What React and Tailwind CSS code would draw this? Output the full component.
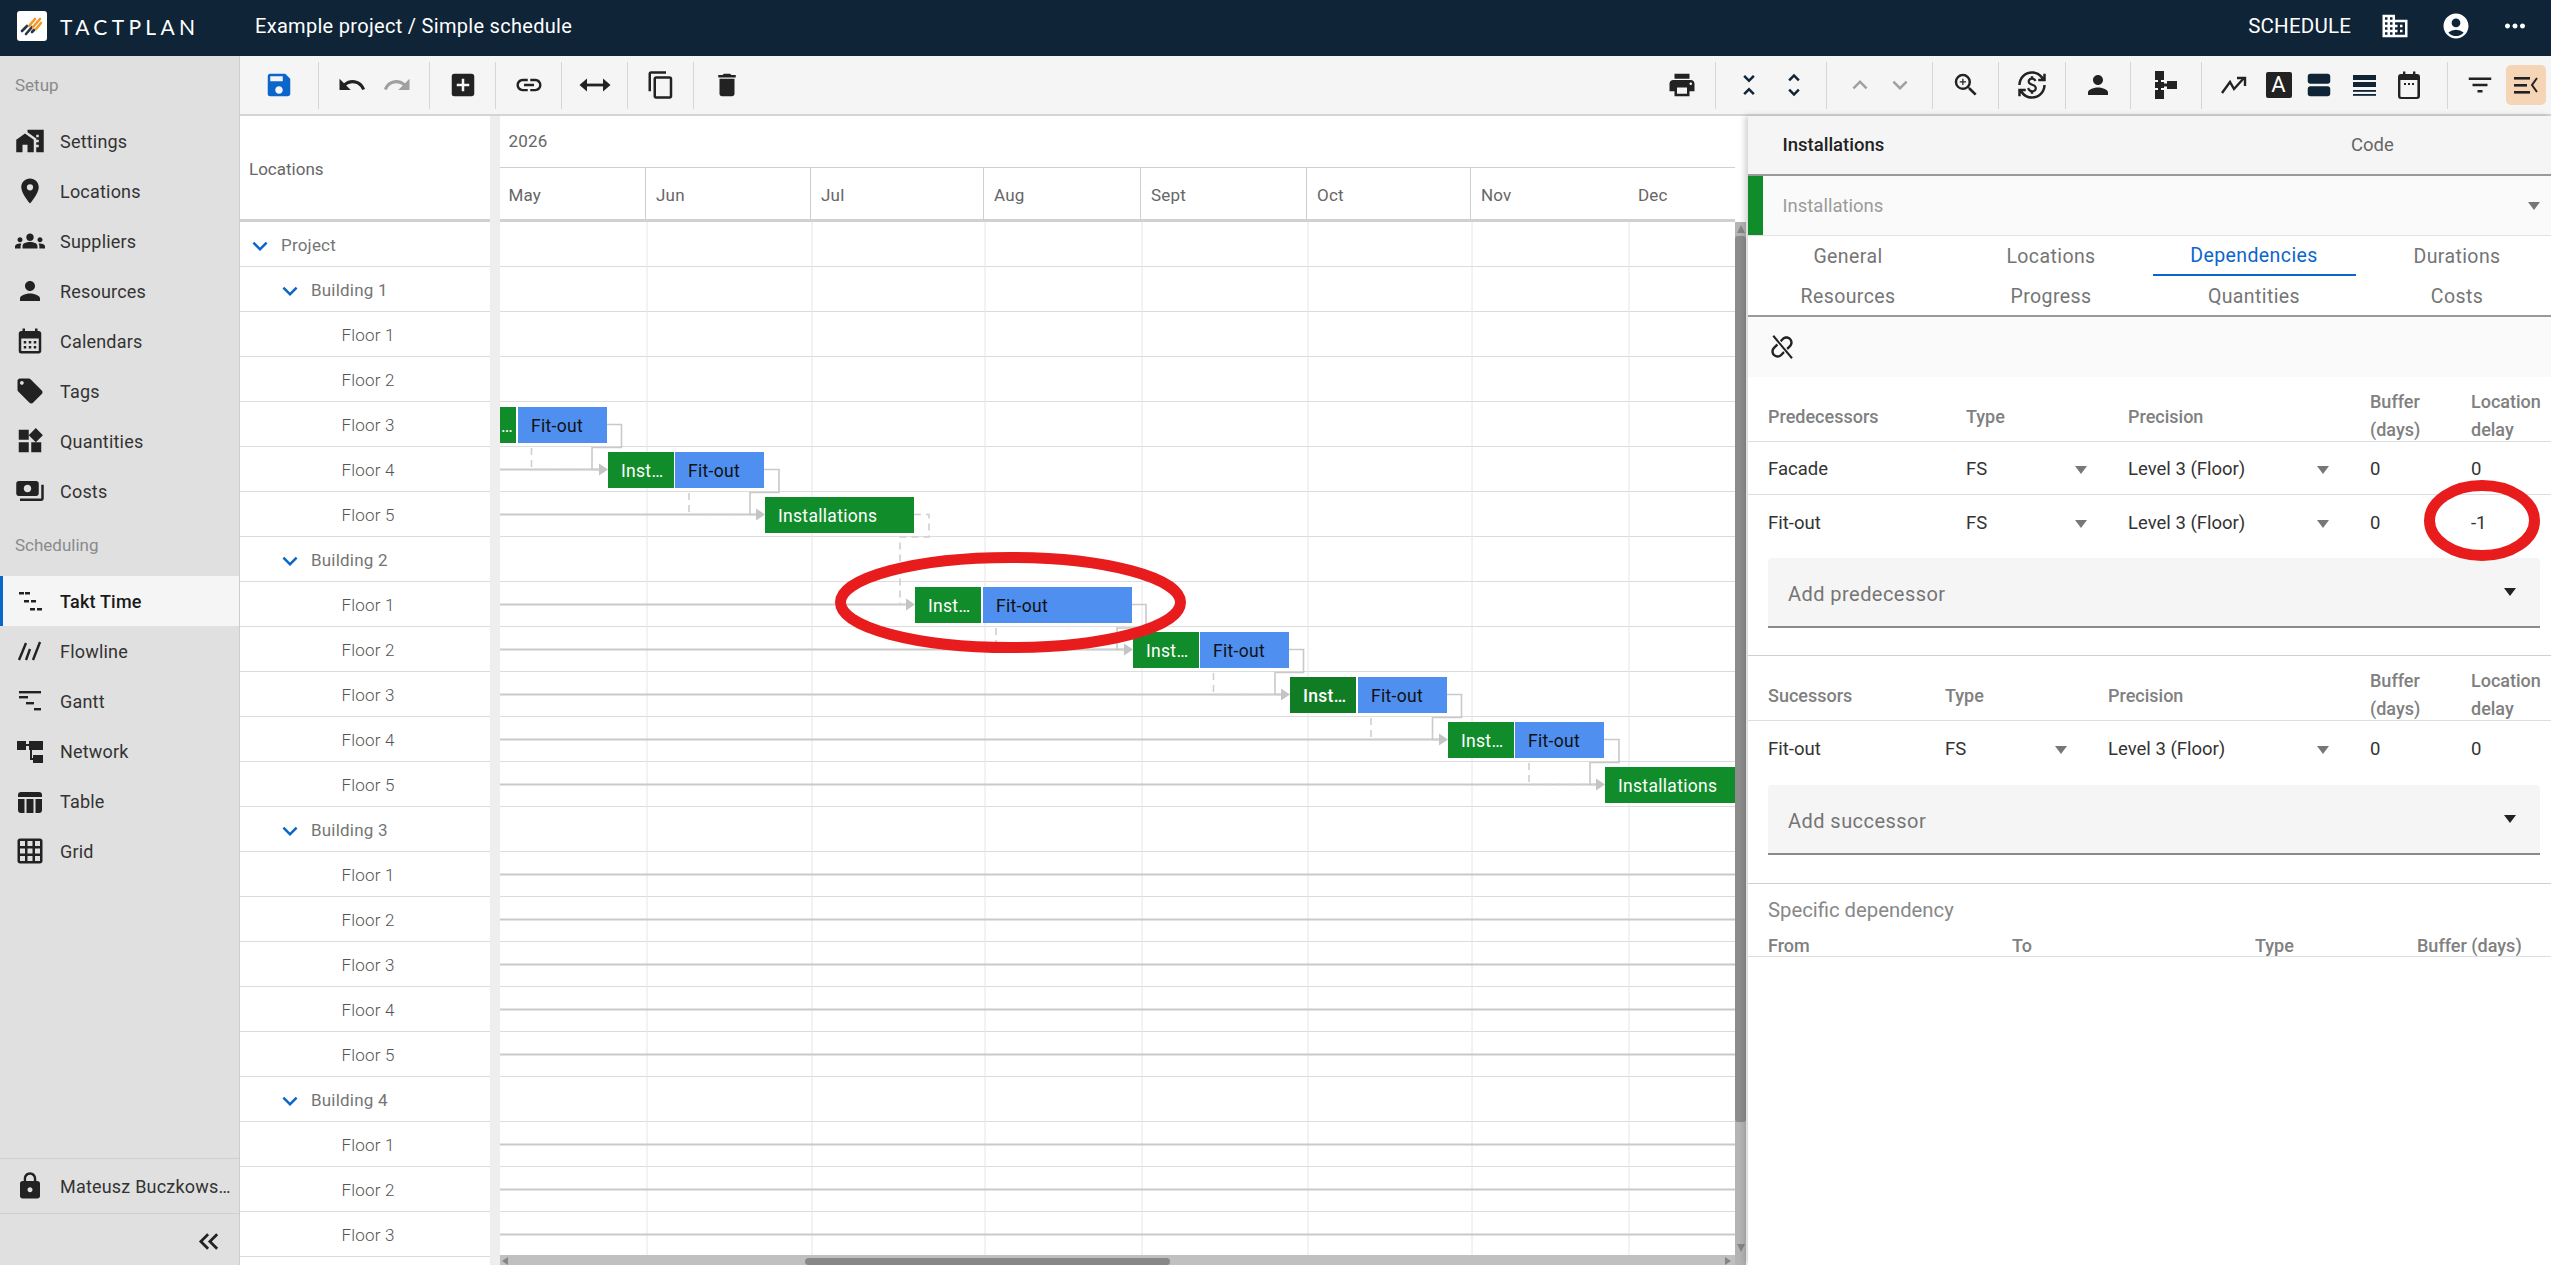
import React from "react";
import {
  MdHomeWork, MdLocationOn, MdGroups, MdPerson, MdCalendarMonth, MdLocalOffer, MdWidgets, MdPayments,
  MdGridOn, MdLock, MdKeyboardDoubleArrowLeft, MdDomain, MdAccountCircle, MdMoreHoriz, MdSave, MdUndo, MdRedo,
  MdAddBox, MdLink, MdOutlineContentCopy, MdDelete, MdPrint, MdUnfoldLess, MdUnfoldMore, MdExpandLess, MdExpandMore,
  MdZoomIn, MdCurrencyExchange, MdViewAgenda, MdFilterList, MdKeyboardArrowDown,
} from "react-icons/md";

const Takt = () => (
  <svg width="30" height="30" viewBox="0 0 30 30" fill="#222">
    <rect x="4" y="6" width="5" height="2.5" /><rect x="10" y="6" width="5" height="2.5" />
    <rect x="9" y="14" width="5" height="2.5" /><rect x="16" y="14" width="5" height="2.5" />
    <rect x="15" y="22" width="5" height="2.5" /><rect x="22" y="22" width="5" height="2.5" />
  </svg>
);
const Flowline = () => (
  <svg width="30" height="30" viewBox="0 0 30 30" stroke="#222" strokeWidth="2.4" fill="none">
    <path d="M4 24 L11 7" /><path d="M11 24 L15 13" /><path d="M18 24 L25 6" />
  </svg>
);
const GanttIcon = () => (
  <svg width="30" height="30" viewBox="0 0 30 30" fill="#222">
    <rect x="4" y="5" width="22" height="2.4" /><rect x="4" y="10" width="9" height="2.4" />
    <rect x="11" y="16" width="8" height="2.4" /><rect x="19" y="22" width="7" height="2.4" />
  </svg>
);
const NetworkIcon = () => (
  <svg width="30" height="30" viewBox="0 0 30 30" fill="#222">
    <rect x="2" y="5" width="9" height="9" /><rect x="14" y="5" width="14" height="9" />
    <rect x="18" y="19" width="10" height="8" /><rect x="10" y="8" width="5" height="2" />
    <rect x="15" y="13" width="2" height="11" /><rect x="15" y="22" width="4" height="2" />
  </svg>
);
const TableIcon = () => (
  <svg width="30" height="30" viewBox="0 0 30 30" fill="#222">
    <path d="M3 9 a3 3 0 0 1 3-3 h18 a3 3 0 0 1 3 3 v2 H3z" />
    <path d="M3 13 h6.5 v14 H6 a3 3 0 0 1-3-3z" /><rect x="11.5" y="13" width="7" height="14" />
    <path d="M20.5 13 H27 v11 a3 3 0 0 1-3 3 h-3.5z" />
  </svg>
);
const ArrowsIcon = () => (
  <svg width="34" height="30" viewBox="0 0 34 30" fill="#222">
    <rect x="6" y="13.6" width="22" height="2.8" /><path d="M1.5 15 L9 8.5 V21.5z" /><path d="M32.5 15 L25 8.5 V21.5z" />
  </svg>
);
const HierIcon = () => (
  <svg width="22" height="28" viewBox="0 0 22 28" fill="#222">
    <rect x="0" y="0" width="9" height="9" /><rect x="0" y="19" width="9" height="9" />
    <rect x="3" y="8" width="3" height="12" /><rect x="0" y="11" width="9" height="6" />
    <rect x="9" y="12.5" width="3" height="3" /><rect x="12" y="10" width="10" height="8" />
  </svg>
);
const TrendIcon = () => (
  <svg width="30" height="30" viewBox="0 0 30 30" fill="none" stroke="#222" strokeWidth="2.4">
    <path d="M3 23 L11 12 L15 19 L25 8" /><path d="M18 8 H26 V16" />
  </svg>
);
const LinesIcon = () => (
  <svg width="30" height="30" viewBox="0 0 30 30" fill="#0f2437">
    <rect x="4" y="5" width="23" height="5" /><rect x="4" y="12" width="23" height="5" />
    <rect x="4" y="20" width="23" height="1.8" /><rect x="4" y="24" width="23" height="1.8" />
  </svg>
);
const CalIcon = () => (
  <svg width="30" height="30" viewBox="0 0 30 30" fill="#222">
    <rect x="9" y="1.5" width="2.4" height="4" /><rect x="19" y="1.5" width="2.4" height="4" />
    <path fillRule="evenodd" d="M7 4 h16 a3 3 0 0 1 3 3 v19 a3 3 0 0 1-3 3 H7 a3 3 0 0 1-3-3 V7 a3 3 0 0 1 3-3z M6.4 10 v16 a1 1 0 0 0 1 1 h15 a1 1 0 0 0 1-1 V10z" />
    <rect x="10" y="13" width="2" height="2" /><rect x="14" y="13" width="2" height="2" /><rect x="18" y="13" width="2" height="2" />
  </svg>
);
const PanelIcon = () => (
  <svg width="30" height="30" viewBox="0 0 30 30" fill="none">
    <rect x="3" y="7" width="16" height="2.6" fill="#222" /><rect x="3" y="14" width="13" height="2.6" fill="#222" />
    <rect x="3" y="21" width="16" height="2.6" fill="#222" /><path d="M26 8 L21 15 L26 22" stroke="#222" strokeWidth="2" />
  </svg>
);
const UnlinkIcon = () => (
  <svg width="30" height="30" viewBox="0 0 24 24" fill="#222">
    <g transform="rotate(-45 12 12)">
      <path d="M3.9 12c0-1.71 1.39-3.1 3.1-3.1h4V7H7c-2.76 0-5 2.24-5 5s2.24 5 5 5h4v-1.9H7c-1.71 0-3.1-1.39-3.1-3.1zM17 7h-4v1.9h4c1.71 0 3.1 1.39 3.1 3.1s-1.39 3.1-3.1 3.1h-4V17h4c2.76 0 5-2.24 5-5s-2.24-5-5-5z" />
    </g>
    <path d="M5 3 L20 21" stroke="#fafafa" strokeWidth="3.5" />
    <path d="M5 3 L20 21" stroke="#222" strokeWidth="1.6" />
  </svg>
);
const Logo = () => (
  <div className="w-[30px] h-[30px] rounded-[3px] bg-white flex items-center justify-center shrink-0">
    <svg width="26" height="26" viewBox="0 0 26 26" fill="none" strokeWidth="2.6" strokeLinecap="round">
      <path d="M3 18 L8 13" stroke="#2a3642" /><path d="M7 21 L13 14" stroke="#2a3642" /><path d="M13 19 L15 17" stroke="#2a3642" />
      <path d="M10 13 L16 6" stroke="#f19a2a" /><path d="M14 14 L21 6" stroke="#f19a2a" /><path d="M17 16 L22 10" stroke="#f19a2a" />
    </svg>
  </div>
);
const Caret = ({ dark }) => (
  <svg width="12" height="8" viewBox="0 0 12 8" className="shrink-0">
    <path d="M0 0 H12 L6 8z" fill={dark ? "#222" : "#777"} />
  </svg>
);
const Tri = ({ dir }) => {
  const d = { up: "M4 0 L8 8 H0z", down: "M0 0 H8 L4 8z", left: "M0 4 L6 0 V8z", right: "M6 4 L0 0 V8z" }[dir];
  return (
    <svg width="8" height="8" viewBox="0 0 8 8" className="shrink-0"><path d={d} fill="#858585" /></svg>
  );
};

const Sep = () => <div className="w-px h-[47px] bg-[#d6d6d6] shrink-0" />;

function NavItem({ icon, label, active }) {
  return (
    <div className={`h-[50px] flex items-center ${active ? "bg-[#f5f5f5] border-l-[3px] border-[#0b66cc] pl-[12px]" : "pl-[15px]"}`}>
      <div className="w-[30px] flex justify-center text-[#222] text-[30px]">{icon}</div>
      <span className={`ml-[15px] text-[18px] tracking-[0.2px] ${active ? "font-medium text-[#1a1a1a]" : "text-[#333]"}`}>{label}</span>
    </div>
  );
}

const setupNav = [
  [<MdHomeWork />, "Settings"], [<MdLocationOn />, "Locations"], [<MdGroups />, "Suppliers"], [<MdPerson />, "Resources"],
  [<MdCalendarMonth />, "Calendars"], [<MdLocalOffer />, "Tags"], [<MdWidgets />, "Quantities"], [<MdPayments />, "Costs"],
];
const schedNav = [
  [<Takt />, "Takt Time", true], [<Flowline />, "Flowline"], [<GanttIcon />, "Gantt"], [<NetworkIcon />, "Network"],
  [<TableIcon />, "Table"], [<MdGridOn />, "Grid"],
];

function buildRows() {
  const rows = [{ label: "Project", level: 0 }];
  for (let b = 1; b <= 4; b++) {
    rows.push({ label: `Building ${b}`, level: 1 });
    const n = b === 4 ? 3 : 5;
    for (let f = 1; f <= n; f++) rows.push({ label: `Floor ${f}`, level: 2 });
  }
  return rows;
}
const rows = buildRows();

const months = [["May", 146], ["Jun", 165], ["Jul", 173], ["Aug", 157], ["Sept", 166], ["Oct", 164], ["Nov", 157], ["Dec", 107]];
const vlines = [647, 812, 985, 1142, 1308, 1472, 1629];

// page coordinates of the chart; canvas origin is (500, 222)
const O = { x: 500, y: 222 };
const bars = [
  ["g", 500, 516, 407, "…"],
  ["b", 518, 607, 407, "Fit-out"],
  ["g", 608, 674, 452, "Inst…"],
  ["b", 675, 764, 452, "Fit-out"],
  ["g", 765, 914, 497, "Installations"],
  ["g", 915, 981, 587, "Inst…"],
  ["b", 983, 1132, 587, "Fit-out"],
  ["g", 1133, 1199, 632, "Inst…"],
  ["b", 1200, 1289, 632, "Fit-out"],
  ["d", 1290, 1356, 677, "Inst…"],
  ["b", 1358, 1447, 677, "Fit-out"],
  ["g", 1448, 1514, 722, "Inst…"],
  ["b", 1515, 1604, 722, "Fit-out"],
  ["g", 1605, 1735, 767, "Installations"],
];
const longLines = [
  [469.5, 600], [514.5, 757], [604.5, 907], [649.5, 1125], [694.5, 1282], [739.5, 1440], [784.5, 1597],
  ...[874.5, 919.5, 964.5, 1009.5, 1054.5, 1144.5, 1189.5, 1234.5].map((y) => [y, 1735]),
];
const solid = [
  "M607 424.5 H621.5 V447.5 H592 V469.5 H600",
  "M764 469.5 H779 V492.5 H750 V514.5 H757",
  "M1132 604.5 H1146 V628 H1117 V649.5 H1125",
  "M1289 649.5 H1303.5 V672.5 H1275 V694.5 H1282",
  "M1447 694.5 H1461.5 V717.5 H1432.5 V739.5 H1440",
  "M1604 739.5 H1619 V762.5 H1590 V784.5 H1597",
];
const dashed = [
  "M531.5 448 V469.5 H600",
  "M689 493 V514.5 H757",
  "M914 514.5 H929 V537 H900 V604.5 H907",
  "M996 628 V649.5 H1125",
  "M1213.5 673 V694.5 H1282",
  "M1371 718 V739.5 H1440",
  "M1529 763 V784.5 H1597",
];
const arrows = [[608, 469.5], [765, 514.5], [915, 604.5], [1133, 649.5], [1290, 694.5], [1448, 739.5], [1605, 784.5]];

function Bar({ kind, x0, x1, y, label }) {
  const cls = kind === "b" ? "bg-[#4f8fef] text-[#111]" : kind === "d" ? "bg-[#107c24] text-white font-medium" : "bg-[#118c2a] text-white";
  const pad = label === "…" ? "pl-[1px]" : "pl-[13px]";
  return (
    <div
      className={`absolute h-[36px] flex items-center pt-[2px] text-[17.5px] tracking-[0.3px] whitespace-nowrap overflow-hidden ${pad} ${cls}`}
      style={{ left: x0 - O.x, width: x1 - x0, top: y - O.y }}
    >
      {label}
    </div>
  );
}

function GanttCanvas() {
  return (
    <div className="relative flex-1 min-h-0 overflow-hidden bg-white">
      {rows.map((r, i) => (
        <div key={i} className="h-[45px] border-b-[1.5px] border-[#dcdcdc]" />
      ))}
      <svg className="absolute left-0 top-0" width="1235" height="1040" viewBox={`${O.x} ${O.y} 1235 1040`} fill="none">
        {vlines.map((x) => <line key={x} x1={x} x2={x} y1={O.y} y2={O.y + 1040} stroke="#e6e6e6" strokeWidth="1" />)}
        {longLines.map(([y, x2]) => <line key={y} x1={O.x} x2={x2} y1={y} y2={y} stroke="#c9c9c9" strokeWidth="2" />)}
        {solid.map((d) => <path key={d} d={d} stroke="#c9c9c9" strokeWidth="1.6" />)}
        {dashed.map((d) => <path key={d} d={d} stroke="#cfcfcf" strokeWidth="1.6" strokeDasharray="7 5" />)}
        {arrows.map(([x, y]) => <path key={x} d={`M${x} ${y} L${x - 9} ${y - 6} V${y + 6}z`} fill="#c4c4c4" />)}
      </svg>
      {bars.map(([kind, x0, x1, y, label]) => (
        <Bar key={x0} kind={kind} x0={x0} x1={x1} y={y} label={label} />
      ))}
    </div>
  );
}

const th = "text-[18px] font-medium text-[#808080]";
const td = "text-[18.5px] text-[#333]";

function DepHeader({ first, cols }) {
  return (
    <div className={`grid ${cols} pl-5 h-[65px] shrink-0 items-center pt-[11px] border-b border-[#dedede] ${th}`}>
      <div>{first}</div>
      <div>Type</div>
      <div>Precision</div>
      <div className="leading-[28px]">Buffer<br />(days)</div>
      <div className="leading-[28px] whitespace-nowrap">Location<br />delay</div>
    </div>
  );
}
function DepRow({ name, cols, border, delay, h }) {
  return (
    <div className={`grid ${cols} pl-5 ${h} shrink-0 items-center pt-[4px] ${border ? "border-b border-[#dedede]" : ""} ${td}`}>
      <div>{name}</div>
      <div className="flex items-center justify-between pr-[41px]"><span>FS</span><Caret /></div>
      <div className="flex items-center justify-between pr-[41px]"><span>Level 3 (Floor)</span><Caret /></div>
      <div>0</div>
      <div>{delay}</div>
    </div>
  );
}
function AddField({ label }) {
  return (
    <div className="ml-5 w-[772px] h-[70px] shrink-0 bg-[#f5f5f5] rounded-t-[4px] border-b-2 border-[#8a8a8a] flex items-center justify-between pl-5 pr-[24px] text-[20px] tracking-[0.45px] text-[#757575]">
      <span className="pt-[3px]">{label}</span><Caret dark />
    </div>
  );
}

const tabs = ["General", "Locations", "Dependencies", "Durations", "Resources", "Progress", "Quantities", "Costs"];

export default function App() {
  const predCols = "grid-cols-[198px_162px_242px_101px_1fr]";
  const sucCols = "grid-cols-[177px_163px_262px_101px_1fr]";
  return (
    <div className="relative w-[2551px] h-[1265px] overflow-hidden flex flex-col bg-white [font-family:Roboto,sans-serif]">
      {/* top bar */}
      <header className="h-14 shrink-0 bg-[#0f2437] text-white flex items-center pl-[17px] pb-[4px]">
        <Logo />
        <span className="ml-[13px] w-[135px] font-['Lato',sans-serif] font-normal text-[21px] tracking-[4.3px] leading-none whitespace-nowrap">TACTPLAN</span>
        <span className="ml-[60px] text-[20px] tracking-[0.3px]">Example project / Simple schedule</span>
        <div className="ml-auto flex items-center pr-[21px]">
          <span className="text-[20.5px] tracking-[0.2px]">SCHEDULE</span>
          <MdDomain className="ml-[29px] text-[30px]" />
          <MdAccountCircle className="ml-[31px] text-[30px]" />
          <MdMoreHoriz className="ml-[29px] text-[30px]" />
        </div>
      </header>

      <div className="flex flex-1 min-h-0">
        {/* sidebar */}
        <aside className="w-60 shrink-0 bg-[#e0e0e0] border-r border-[#cdcdcd] flex flex-col">
          <div className="h-[60px] flex items-center pl-[15px] text-[17px] text-[#8a8a8a]">Setup</div>
          <div>
            {setupNav.map(([icon, label]) => <NavItem key={label} icon={icon} label={label} />)}
          </div>
          <div className="h-[60px] flex items-center pl-[15px] text-[17px] text-[#8a8a8a]">Scheduling</div>
          <div>
            {schedNav.map(([icon, label, active]) => <NavItem key={label} icon={icon} label={label} active={active} />)}
          </div>
          <div className="mt-auto border-t border-[#cfcfcf] h-[55px] flex items-center pl-[15px]">
            <div className="w-[30px] flex justify-center text-[30px] text-[#222]"><MdLock /></div>
            <span className="ml-[15px] w-[172px] truncate text-[18px] tracking-[0.2px] text-[#333]">Mateusz Buczkowski</span>
          </div>
          <div className="border-t border-[#cfcfcf] h-[52px] flex items-center justify-end pr-[14px] pt-[3px] text-[33px] text-[#222]">
            <MdKeyboardDoubleArrowLeft />
          </div>
        </aside>

        <main className="flex-1 min-w-0 flex flex-col">
          {/* toolbar */}
          <div className="h-[60px] shrink-0 bg-[#f5f5f5] border-b-2 border-[#d4d4d4] flex items-center text-[30px] text-[#222]">
            <div className="w-[78px] flex justify-center text-[#0b66cc]"><MdSave /></div><Sep />
            <div className="w-[110px] flex justify-center gap-[15px]"><MdUndo /><MdRedo className="text-[#a0a0a0]" /></div><Sep />
            <div className="w-[65px] flex justify-center"><MdAddBox /></div><Sep />
            <div className="w-[65px] flex justify-center"><MdLink /></div><Sep />
            <div className="w-[65px] flex justify-center"><ArrowsIcon /></div><Sep />
            <div className="w-[65px] flex justify-center"><MdOutlineContentCopy /></div><Sep />
            <div className="w-[65px] flex justify-center"><MdDelete /></div>

            <div className="ml-auto w-[66px] flex justify-center"><MdPrint /></div><Sep />
            <div className="w-[110px] flex justify-center gap-[15px] text-[#0f2437]"><MdUnfoldLess /><MdUnfoldMore /></div><Sep />
            <div className="w-[105px] flex justify-center gap-[10px] text-[#a0a0a0]"><MdExpandLess /><MdExpandMore /></div><Sep />
            <div className="w-[65px] flex justify-center"><MdZoomIn /></div><Sep />
            <div className="w-[66px] flex justify-center"><MdCurrencyExchange /></div><Sep />
            <div className="w-[64px] flex justify-center"><MdPerson /></div><Sep />
            <div className="w-[70px] flex justify-center pr-[1px]"><HierIcon /></div><Sep />
            <div className="w-[245px] flex items-center pl-[17px]">
              <TrendIcon />
              <div className="ml-[16.5px] w-[26px] h-[26px] rounded-[2px] bg-[#222] text-white text-[22px] leading-[26px] text-center">A</div>
              <MdViewAgenda className="ml-[12.5px] text-[#0f2437]" />
              <div className="ml-[15px]"><LinesIcon /></div>
              <div className="ml-[15px]"><CalIcon /></div>
            </div><Sep />
            <div className="w-[103px] shrink-0 flex items-center pl-[17px] gap-[11px]">
              <MdFilterList />
              <div className="w-[40px] h-[40px] rounded-[5px] bg-[#f5d5b5] flex items-center justify-center"><PanelIcon /></div>
            </div>
          </div>

          <div className="flex flex-1 min-h-0">
            {/* locations tree */}
            <div className="w-[250px] shrink-0 flex flex-col overflow-hidden">
              <div className="h-[106px] shrink-0 border-b-[3px] border-[#d0d0d0] flex items-center pl-[9px] pt-[4px] text-[17px] text-[#666]">Locations</div>
              {rows.map((r, i) => (
                <div key={i} className="h-[45px] shrink-0 border-b-[1.5px] border-[#dcdcdc] flex items-center pt-[3px]">
                  {r.level === 2 ? (
                    <span className="ml-[101.5px] text-[17px] font-light tracking-[0.2px] text-[#555]">{r.label}</span>
                  ) : (
                    <div className={`flex items-center text-[#757575] text-[17px] tracking-[0.2px] ${r.level === 0 ? "ml-[5px]" : "ml-[35px]"}`}>
                      <MdKeyboardArrowDown className="text-[30px] text-[#0b66cc] mr-[6px]" />
                      <span>{r.label}</span>
                    </div>
                  )}
                </div>
              ))}
            </div>
            <div className="w-[10px] shrink-0 bg-[#eeeeee]" />

            {/* chart */}
            <div className="w-[1248px] shrink-0 flex flex-col">
              <div className="h-[52px] shrink-0 w-[1235px] border-b-[1.5px] border-[#d0d0d0] flex items-center pl-[8.5px] pt-[1px] text-[17px] tracking-[0.2px] text-[#666]">2026</div>
              <div className="h-[54px] shrink-0 w-[1235px] border-b-[3px] border-[#d0d0d0] flex">
                {months.map(([m, w], i) => (
                  <div key={m} className={`flex items-center pt-[5px] text-[17px] tracking-[0.2px] text-[#666] ${i === 0 ? "pl-[8.5px]" : "pl-[10px]"} ${i < 6 ? "border-r border-[#cfcfcf]" : ""}`} style={{ width: w }}>{m}</div>
                ))}
              </div>
              <div className="flex-1 min-h-0 flex">
                <div className="w-[1235px] flex flex-col">
                  <GanttCanvas />
                  <div className="h-[10px] shrink-0 bg-[#c0c0c0] relative flex items-end justify-between px-[2px]">
                    <Tri dir="left" />
                    <div className="absolute left-[305px] bottom-0 w-[365px] h-[7px] rounded-[4px] bg-[#888888]" />
                    <Tri dir="right" />
                  </div>
                </div>
                <div className="w-[11px] bg-[#b4b4b4] flex flex-col items-center">
                  <div className="h-[14px] flex items-center"><Tri dir="up" /></div>
                  <div className="w-full h-[886px] rounded-[3px] bg-[#8c8c8c]" />
                  <div className="mt-auto mb-[13px]"><Tri dir="down" /></div>
                </div>
              </div>
            </div>

            {/* right panel */}
            <section className="flex-1 min-w-0 overflow-hidden bg-white shadow-[-3px_0_6px_rgba(0,0,0,0.18)] z-10 flex flex-col">
              <div className="h-[60px] shrink-0 bg-[#f5f5f5] border-b-2 border-[#9a9a9a] flex items-center pt-[2px]">
                <span className="w-[603px] pl-[34.5px] text-[18.5px] font-medium text-[#222]">Installations</span>
                <span className="text-[18.5px] text-[#666]">Code</span>
              </div>
              <div className="h-[60px] shrink-0 bg-[#fafafa] border-b border-[#e2e2e2] flex items-center">
                <div className="w-[15px] h-full bg-[#118c2a]" />
                <span className="ml-[19.5px] mt-[3px] text-[18.5px] text-[#9a9a9a]">Installations</span>
                <div className="ml-auto mr-[11px]"><Caret /></div>
              </div>
              <div className="h-[81px] shrink-0 border-b-2 border-[#9a9a9a] overflow-hidden">
                <div className="-ml-[1.5px] w-[812px] h-full grid grid-cols-[repeat(4,203px)] grid-rows-2 text-[19.5px] tracking-[0.4px] text-[#757575]">
                  {tabs.map((t) => (
                    <div key={t} className={`flex items-center justify-center pt-[2px] ${t === "Dependencies" ? "text-[#0b66cc] border-b-2 border-[#0b66cc]" : ""}`}>{t}</div>
                  ))}
                </div>
              </div>
              <div className="h-[60px] shrink-0 bg-[#fafafa] flex items-center pl-[19px]"><UnlinkIcon /></div>

              <DepHeader first="Predecessors" cols={predCols} />
              <DepRow name="Facade" cols={predCols} border delay="0" h="h-[53px]" />
              <DepRow name="Fit-out" cols={predCols} delay="-1" h="h-[53px]" />
              <div className="h-[10px] shrink-0" />
              <AddField label="Add predecessor" />
              <div className="h-[28px] shrink-0 border-b border-[#d0d0d0]" />

              <DepHeader first="Sucessors" cols={sucCols} />
              <DepRow name="Fit-out" cols={sucCols} delay="0" h="h-[54px]" />
              <div className="h-[10px] shrink-0" />
              <AddField label="Add successor" />
              <div className="h-[29px] shrink-0 border-b border-[#d0d0d0]" />

              <div className="h-[48px] shrink-0 flex items-center pl-5 pt-[5px] text-[20.3px] text-[#888888]">Specific dependency</div>
              <div className="h-[18px] shrink-0 grid grid-cols-[244px_243px_162px_1fr] pl-5 items-center text-[18px] font-medium text-[#808080]">
                <div>From</div><div>To</div><div>Type</div><div>Buffer (days)</div>
              </div>
              <div className="mt-[6px] border-b border-[#dedede]" />
            </section>
          </div>
        </main>
      </div>

      {/* annotation ellipses drawn over the page */}
      <svg className="absolute left-[829px] top-[546px] pointer-events-none z-20" width="364" height="114" viewBox="0 0 364 114" fill="none">
        <ellipse cx="181.5" cy="56.5" rx="170" ry="45" stroke="#e81c1c" strokeWidth="11" />
      </svg>
      <svg className="absolute left-[2418px] top-[474px] pointer-events-none z-20" width="128" height="94" viewBox="0 0 128 94" fill="none">
        <ellipse cx="64" cy="46.5" rx="52.5" ry="35" stroke="#e81c1c" strokeWidth="11" />
      </svg>
    </div>
  );
}
